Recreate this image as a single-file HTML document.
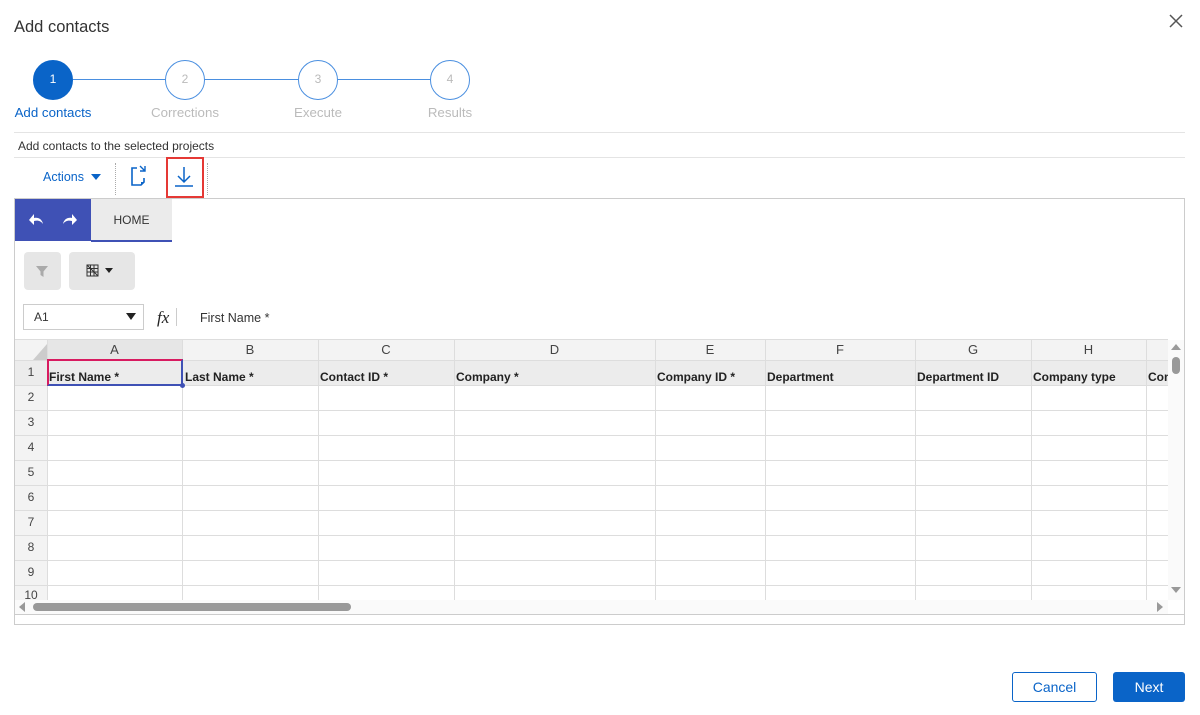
<!DOCTYPE html>
<html><head><style>
*{box-sizing:border-box;margin:0;padding:0}
body{width:1200px;height:715px;background:#fff;font-family:"Liberation Sans",Arial,sans-serif;position:relative;overflow:hidden;color:#333}
.a{position:absolute}
.circ{position:absolute;width:40px;height:40px;border-radius:50%;border:1.5px solid #4a8fe0;background:#fff;color:#bbb;font-size:12px;text-align:center;line-height:37px}
.lbl{position:absolute;top:105px;font-size:13.3px;color:#bbb;transform:translateX(-50%)}
.vl{position:absolute;width:1px;background:#ddd}
.hl{position:absolute;height:1px;background:#ddd}
.ch{position:absolute;top:340px;height:20px;font-size:13px;color:#444;text-align:center;line-height:20px}
.hd{position:absolute;top:370px;font-size:12px;font-weight:bold;color:#222}
.rn{position:absolute;left:15px;width:32px;text-align:center;font-size:12px;color:#444}
</style></head><body>
<div class="a" style="left:14px;top:18px;font-size:16.5px;color:#333">Add contacts</div>
<svg class="a" style="left:1168px;top:13px" width="16" height="16"><path d="M2 2L14 14M14 2L2 14" stroke="#555" stroke-width="1.5"/></svg>
<div class="a" style="left:73px;top:79px;width:360px;height:1px;background:#4a8fe0"></div>
<div class="circ" style="left:33px;top:60px;background:#0a64c8;border-color:#0a64c8;color:#fff">1</div>
<div class="circ" style="left:165px;top:60px">2</div>
<div class="circ" style="left:298px;top:60px">3</div>
<div class="circ" style="left:430px;top:60px">4</div>
<div class="lbl" style="left:53px;color:#0a64c8">Add contacts</div>
<div class="lbl" style="left:185px">Corrections</div>
<div class="lbl" style="left:318px">Execute</div>
<div class="lbl" style="left:450px">Results</div>
<div class="hl" style="left:14px;top:132px;width:1171px;background:#e4e4e4"></div>
<div class="a" style="left:18px;top:139px;font-size:12px;color:#333">Add contacts to the selected projects</div>
<div class="hl" style="left:14px;top:157px;width:1171px;background:#e4e4e4"></div>
<div class="a" style="left:43px;top:170px;font-size:12.5px;color:#0a64c8">Actions</div>
<svg class="a" style="left:91px;top:173px" width="10" height="8"><path d="M0 1H10L5 7Z" fill="#0a64c8"/></svg>
<div class="a" style="left:115px;top:163px;height:32px;border-left:1px dotted #aaa"></div>
<svg class="a" style="left:128px;top:165px" width="22" height="24"><path d="M9 3H4V20H13L16 17V13" fill="none" stroke="#0a64c8" stroke-width="1.6"/><path d="M12 6H17V1M17 6L12 1" fill="none" stroke="#0a64c8" stroke-width="1.4"/><path d="M13 20L16 17H13Z" fill="#0a64c8"/></svg>
<div class="a" style="left:166px;top:157px;width:38px;height:41px;border:2px solid #e53935"></div>
<svg class="a" style="left:173px;top:165px" width="22" height="24"><path d="M11 2V17M5 11L11 17L17 11" fill="none" stroke="#0a64c8" stroke-width="1.5"/><path d="M2 21H20" stroke="#0a64c8" stroke-width="1.5"/></svg>
<div class="a" style="left:207px;top:163px;height:32px;border-left:1px dotted #aaa"></div>
<div class="a" style="left:14px;top:198px;width:1171px;height:427px;border:1px solid #ccc"></div>
<div class="a" style="left:15px;top:199px;width:76px;height:42px;background:#3f51b5"></div>
<svg class="a" style="left:27px;top:211px" width="56" height="18"><path d="M14 13C13 8 9 6 5 7V3L0 9L5 14V10C9 9 12 10 14 13Z" fill="#fff" transform="translate(2,0)"/><path d="M0 13C1 8 5 6 9 7V3L14 9L9 14V10C5 9 2 10 0 13Z" fill="#fff" transform="translate(36,0)"/></svg>
<div class="a" style="left:91px;top:199px;width:81px;height:43px;background:#ebebeb;border-bottom:2px solid #3f51b5;font-size:12px;text-align:center;line-height:43px;color:#333">HOME</div>
<div class="a" style="left:24px;top:252px;width:37px;height:38px;background:#e6e6e6;border-radius:4px"></div>
<svg class="a" style="left:36px;top:265px" width="13" height="13"><path d="M0 1H12L7.5 6.5V12L4.5 10V6.5Z" fill="#aaa"/></svg>
<div class="a" style="left:69px;top:252px;width:66px;height:38px;background:#e6e6e6;border-radius:4px"></div>
<svg class="a" style="left:86px;top:264px" width="30" height="14"><rect x="1" y="1" width="11" height="11" fill="none" stroke="#333"/><path d="M1 4.5H12M1 8H12M4.5 1V12M8 1V12" stroke="#333"/><path d="M1 1L12 12" stroke="#333"/><path d="M19 4H27L23 9Z" fill="#222"/></svg>
<div class="a" style="left:23px;top:304px;width:121px;height:26px;border:1px solid #ccc;font-size:12px;line-height:24px;padding-left:10px;color:#333">A1</div>
<svg class="a" style="left:126px;top:313px" width="10" height="8"><path d="M0 0H10L5 7Z" fill="#222"/></svg>
<div class="a" style="left:157px;top:308px;font-family:'Liberation Serif',serif;font-style:italic;font-size:17px;color:#222">fx</div>
<div class="a" style="left:176px;top:308px;height:18px;border-left:1px solid #ccc"></div>
<div class="a" style="left:200px;top:311px;font-size:12.5px;color:#333">First Name *</div>
<div class="a" style="left:15px;top:339px;width:1153px;height:1px;background:#ddd"></div>
<div class="a" style="left:15px;top:340px;width:1153px;height:20px;background:#f3f3f3"></div>
<div class="a" style="left:47px;top:340px;width:135px;height:20px;background:#e6e6e6"></div>
<div class="a" style="left:15px;top:360px;width:1153px;height:25px;background:#ececec"></div>
<div class="a" style="left:15px;top:385px;width:1153px;height:215px;background:#fff"></div>
<div class="a" style="left:15px;top:385px;width:32px;height:215px;background:#f3f3f3"></div>
<svg class="a" style="left:33px;top:344px" width="14" height="16"><path d="M14 0V16H0Z" fill="#ccc"/></svg>
<div class="vl" style="left:47px;top:340px;height:260px"></div>
<div class="vl" style="left:182px;top:340px;height:260px"></div>
<div class="vl" style="left:318px;top:340px;height:260px"></div>
<div class="vl" style="left:454px;top:340px;height:260px"></div>
<div class="vl" style="left:655px;top:340px;height:260px"></div>
<div class="vl" style="left:765px;top:340px;height:260px"></div>
<div class="vl" style="left:915px;top:340px;height:260px"></div>
<div class="vl" style="left:1031px;top:340px;height:260px"></div>
<div class="vl" style="left:1146px;top:340px;height:260px"></div>
<div class="hl" style="left:15px;top:360px;width:1153px"></div>
<div class="hl" style="left:15px;top:385px;width:1153px"></div>
<div class="hl" style="left:15px;top:410px;width:1153px"></div>
<div class="hl" style="left:15px;top:435px;width:1153px"></div>
<div class="hl" style="left:15px;top:460px;width:1153px"></div>
<div class="hl" style="left:15px;top:485px;width:1153px"></div>
<div class="hl" style="left:15px;top:510px;width:1153px"></div>
<div class="hl" style="left:15px;top:535px;width:1153px"></div>
<div class="hl" style="left:15px;top:560px;width:1153px"></div>
<div class="hl" style="left:15px;top:585px;width:1153px"></div>
<div class="ch" style="left:47px;width:135px">A</div>
<div class="ch" style="left:182px;width:136px">B</div>
<div class="ch" style="left:318px;width:136px">C</div>
<div class="ch" style="left:454px;width:201px">D</div>
<div class="ch" style="left:655px;width:110px">E</div>
<div class="ch" style="left:765px;width:150px">F</div>
<div class="ch" style="left:915px;width:116px">G</div>
<div class="ch" style="left:1031px;width:115px">H</div>
<div class="hd" style="left:49px">First Name *</div>
<div class="hd" style="left:185px">Last Name *</div>
<div class="hd" style="left:320px">Contact ID *</div>
<div class="hd" style="left:456px">Company *</div>
<div class="hd" style="left:657px">Company ID *</div>
<div class="hd" style="left:767px">Department</div>
<div class="hd" style="left:917px">Department ID</div>
<div class="hd" style="left:1033px">Company type</div>
<div class="hd" style="left:1148px;width:20px;overflow:hidden;white-space:nowrap">Company</div>
<div class="a" style="left:47px;top:359px;width:136px;height:27px;border:2px solid #3f51b5;border-top-color:#d81b60;border-left-color:#d81b60"></div>
<div class="a" style="left:180px;top:383px;width:5px;height:5px;border-radius:50%;background:#3f51b5"></div>
<div class="rn" style="top:365px">1</div>
<div class="rn" style="top:390px">2</div>
<div class="rn" style="top:415px">3</div>
<div class="rn" style="top:440px">4</div>
<div class="rn" style="top:465px">5</div>
<div class="rn" style="top:490px">6</div>
<div class="rn" style="top:515px">7</div>
<div class="rn" style="top:540px">8</div>
<div class="rn" style="top:565px">9</div>
<div class="rn" style="top:588px;height:12px;overflow:hidden">10</div>
<div class="a" style="left:1168px;top:340px;width:16px;height:260px;background:#fafafa"></div>
<svg class="a" style="left:1171px;top:343px" width="10" height="8"><path d="M0 7H10L5 1Z" fill="#999"/></svg>
<div class="a" style="left:1172px;top:357px;width:8px;height:17px;border-radius:4px;background:#999"></div>
<svg class="a" style="left:1171px;top:586px" width="10" height="8"><path d="M0 1H10L5 7Z" fill="#999"/></svg>
<div class="a" style="left:15px;top:600px;width:1153px;height:14px;background:#fafafa"></div>
<svg class="a" style="left:18px;top:602px" width="8" height="10"><path d="M7 0V10L1 5Z" fill="#999"/></svg>
<div class="a" style="left:33px;top:603px;width:318px;height:8px;border-radius:4px;background:#999"></div>
<svg class="a" style="left:1156px;top:602px" width="8" height="10"><path d="M1 0V10L7 5Z" fill="#999"/></svg>
<div class="hl" style="left:15px;top:614px;width:1169px;background:#ccc"></div>
<div class="a" style="left:1012px;top:672px;width:85px;height:30px;border:1px solid #0a64c8;border-radius:3px;color:#0a64c8;font-size:14px;text-align:center;line-height:28px">Cancel</div>
<div class="a" style="left:1113px;top:672px;width:72px;height:30px;background:#0a64c8;border-radius:3px;color:#fff;font-size:14px;text-align:center;line-height:30px">Next</div>
</body></html>
